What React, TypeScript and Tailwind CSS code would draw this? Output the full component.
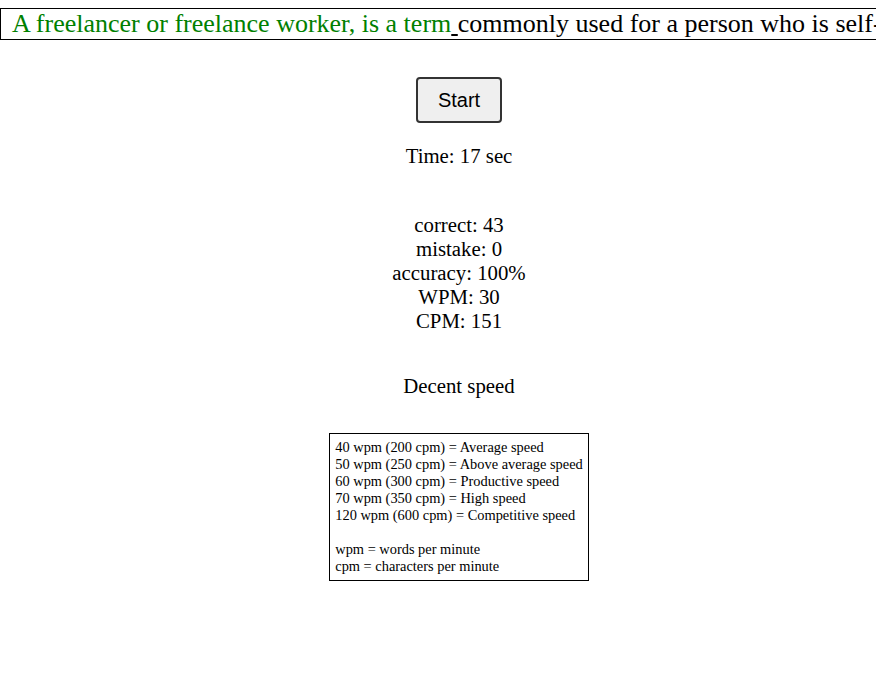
import React from "react";

const serif = '"Liberation Serif", "Times New Roman", serif';

export default function App() {
  return (
    <div className="w-[876px] h-[688px] overflow-hidden bg-white text-black" style={{ fontFamily: serif }}>
      <div
        className="mt-[8px] h-[32px] w-[1400px] border border-black overflow-hidden whitespace-nowrap pl-[11px] text-[26px] leading-[29px]"
        style={{ fontFamily: serif }}
      >
        <span className="text-[#008000]">A freelancer or freelance worker, is a term</span>
        <span className="underline decoration-black">&nbsp;</span>
        <span>commonly used for a person who is self-employed and is not necessarily committed to a particular employer long-term.</span>
      </div>
      <div className="w-[918px] flex flex-col items-center text-center">
        <button
          className="mt-[37px] w-[86px] h-[46px] rounded-[4px] border-2 border-[#333] bg-[#efefef] text-[20px] text-black"
          style={{ fontFamily: '"Liberation Sans", Arial, sans-serif' }}
        >
          Start
        </button>
        <div className="mt-[21px] text-[20.8px] leading-[24px]">Time: 17 sec</div>
        <div className="mt-[45px] text-[20.8px] leading-[24px]">
          <div>correct: 43</div>
          <div>mistake: 0</div>
          <div>accuracy: 100%</div>
          <div>WPM: 30</div>
          <div>CPM: 151</div>
        </div>
        <div className="mt-[41px] text-[20.8px] leading-[24px]">Decent speed</div>
        <div className="mt-[35px] border border-black p-[5px] text-left text-[14.4px] leading-[17px]">
          <div>40 wpm (200 cpm) = Average speed</div>
          <div>50 wpm (250 cpm) = Above average speed</div>
          <div>60 wpm (300 cpm) = Productive speed</div>
          <div>70 wpm (350 cpm) = High speed</div>
          <div>120 wpm (600 cpm) = Competitive speed</div>
          <div>&nbsp;</div>
          <div>wpm = words per minute</div>
          <div>cpm = characters per minute</div>
        </div>
      </div>
    </div>
  );
}
